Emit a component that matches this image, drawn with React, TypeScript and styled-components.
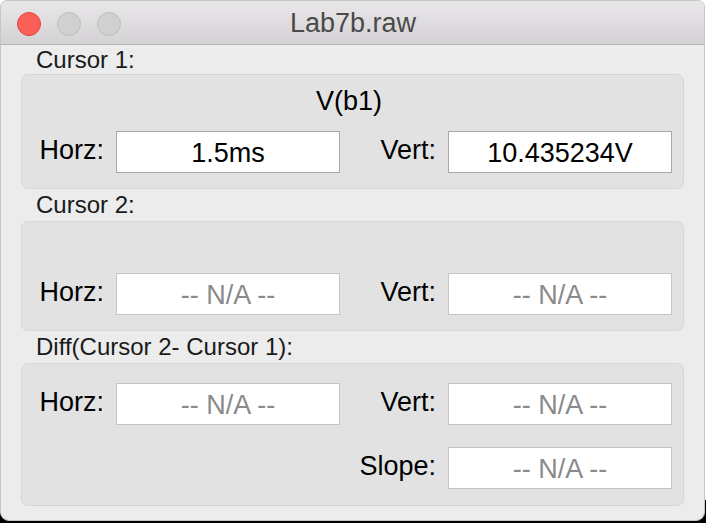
import styled, { createGlobalStyle } from "styled-components";

const GlobalStyle = createGlobalStyle`
  html {
    background: linear-gradient(to bottom, #ffffff 0, #ffffff 500px, #000000 500px);
    min-height: 100%;
  }
  body {
    margin: 0;
    font-family: "Liberation Sans", Arial, sans-serif;
  }
  * {
    box-sizing: border-box;
  }
`;

type Field = { label: string; value?: string };

const ValueField = ({ label, value }: Field) => (
  <>
    <FieldLabel>{label}</FieldLabel>
    <Input $empty={!value}>{value ?? "-- N/A --"}</Input>
  </>
);

const App = () => {
  return (
    <>
      <GlobalStyle />
      <Window>
        <TitleBar>
          <Lights>
            <Light $color="#fc5f57" $ring="#df4744" />
            <Light $color="#d1d0d1" $ring="#bfbebf" />
            <Light $color="#d1d0d1" $ring="#bfbebf" />
          </Lights>
          <Title>Lab7b.raw</Title>
        </TitleBar>

        <Content>
          <SectionLabel $height={29}>Cursor 1:</SectionLabel>
          <Group $pad="6px 11px 15px 0">
            <TraceName $height={40}>V(b1)</TraceName>
            <Row>
              <ValueField label="Horz:" value="1.5ms" />
              <ValueField label="Vert:" value="10.435234V" />
            </Row>
          </Group>

          <SectionLabel $height={32}>Cursor 2:</SectionLabel>
          <Group $pad="6px 11px 15px 0">
            <TraceName $height={35} />
            <Row>
              <ValueField label="Horz:" />
              <ValueField label="Vert:" />
            </Row>
          </Group>

          <SectionLabel $height={32}>Diff(Cursor 2- Cursor 1):</SectionLabel>
          <Group $pad="19px 11px 16px 0" $gap={22}>
            <Row>
              <ValueField label="Horz:" />
              <ValueField label="Vert:" />
            </Row>
            <Row>
              <Spacer />
              <Spacer />
              <ValueField label="Slope:" />
            </Row>
          </Group>
        </Content>
      </Window>
    </>
  );
};

const Window = styled.div`
  width: 705px;
  height: 521px;
  background: #ececec;
  border: 1px solid #c6c6c6;
  border-radius: 7px 7px 9px 9px;
  overflow: hidden;
  display: flex;
  flex-direction: column;
`;

const TitleBar = styled.div`
  height: 44px;
  flex-shrink: 0;
  position: relative;
  display: flex;
  align-items: center;
  justify-content: center;
  background: linear-gradient(to bottom, #e9e7e9, #d4d2d4);
  border-bottom: 1px solid #b8b6b8;
`;

const Lights = styled.div`
  position: absolute;
  left: 16px;
  top: 11px;
  display: flex;
  gap: 16px;
`;

const Light = styled.span<{ $color: string; $ring: string }>`
  width: 24px;
  height: 24px;
  border-radius: 50%;
  background: ${(p) => p.$color};
  border: 1px solid ${(p) => p.$ring};
`;

const Title = styled.div`
  font-size: 27px;
  color: #4b4a4b;
  margin-left: 1px;
  margin-top: 1px;
`;

const Content = styled.div`
  padding: 0 20px 0 20px;
  display: flex;
  flex-direction: column;
`;

const SectionLabel = styled.div<{ $height: number }>`
  height: ${(p) => p.$height}px;
  line-height: ${(p) => p.$height}px;
  padding-left: 15px;
  font-size: 24px;
  color: #1a1a1a;
`;

const Group = styled.div<{ $pad: string; $gap?: number }>`
  background: #e2e2e2;
  border: 1px solid #d6d6d6;
  border-radius: 7px;
  padding: ${(p) => p.$pad};
  display: flex;
  flex-direction: column;
  gap: ${(p) => p.$gap ?? 10}px;
`;

const TraceName = styled.div<{ $height: number }>`
  height: ${(p) => p.$height}px;
  display: flex;
  align-items: center;
  justify-content: center;
  font-size: 27px;
  color: #000;
  padding-left: 4px;
`;

const Row = styled.div`
  display: grid;
  grid-template-columns: 82px 224px 84px 224px;
  column-gap: 12px;
  align-items: center;
`;

const FieldLabel = styled.div`
  text-align: right;
  font-size: 27px;
  color: #000;
  margin-top: -3px;
`;

const Spacer = styled.div``;

const Input = styled.div<{ $empty: boolean }>`
  height: 42px;
  background: #ffffff;
  border: 1px solid ${(p) => (p.$empty ? "#c6c6c6" : "#a9a9a9")};
  display: flex;
  align-items: center;
  justify-content: center;
  font-size: 27px;
  padding-top: 2px;
  color: ${(p) => (p.$empty ? "#8a8a8a" : "#000")};
`;

export default App;
